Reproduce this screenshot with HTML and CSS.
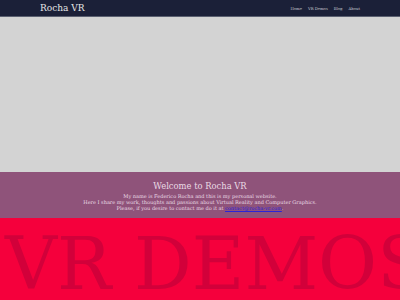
FILE: index.html
```html
<!DOCTYPE html>
<html lang="en">
<head>
    <meta charset="UTF-8">
    <title>Rocha VR</title>
    <link rel="stylesheet" href="styles.css">
</head>
<body>
    <header class="site-header">
        <div class="header-inner">
            <a class="logo" href="#">Rocha VR</a>
            <nav class="nav">
                <a href="#">Home</a>
                <a href="#">VR Demos</a>
                <a href="#">Blog</a>
                <a href="#">About</a>
            </nav>
        </div>
    </header>

    <section class="hero"></section>

    <section class="welcome">
        <h1>Welcome to Rocha VR</h1>
        <p>My name is Federico Rocha and this is my personal website.<br>
        Here I share my work, thoughts and passions about Virtual Reality and Computer Graphics.<br>
        Please, if you desire to contact me do it at <a href="#">contact@rocha-vr.com</a>.</p>
    </section>

    <section class="demos">
        <div class="demos-title">VR DEMOS</div>
    </section>
</body>
</html>
```

FILE: styles.css
```css
body {
    margin: 0;
    font-family: "DejaVu Serif", serif;
    background: #d3d3d3;
}
.site-header {
    background: #1b2038;
    border-bottom: 1px solid #5a5f70;
    height: 16px;
}
.header-inner {
    display: flex;
    align-items: center;
    justify-content: space-between;
    height: 100%;
    padding: 0 40px;
}
.logo {
    color: #e6e6e6;
    text-decoration: none;
    font-size: 9px;
}
.nav {
    display: flex;
    gap: 6px;
}
.nav a {
    color: #c8c8d0;
    text-decoration: none;
    font-size: 3.8px;
}
.hero {
    height: 155px;
    background: #d3d3d3;
}
.welcome {
    background: #8f537a;
    height: 46px;
    text-align: center;
    color: #eadbe5;
}
.welcome h1 {
    margin: 0;
    padding-top: 9px;
    font-size: 8.4px;
    font-weight: normal;
    line-height: 10px;
}
.welcome p {
    margin: 2px 0 0;
    font-size: 5px;
    line-height: 6px;
}
.welcome a {
    color: #2a24d8;
}
.demos {
    background: #f5003c;
    height: 82px;
    overflow: hidden;
}
.demos-title {
    color: #d2003a;
    font-size: 72px;
    line-height: 82px;
    white-space: nowrap;
    padding: 5px 0 0 5px;
}
```
